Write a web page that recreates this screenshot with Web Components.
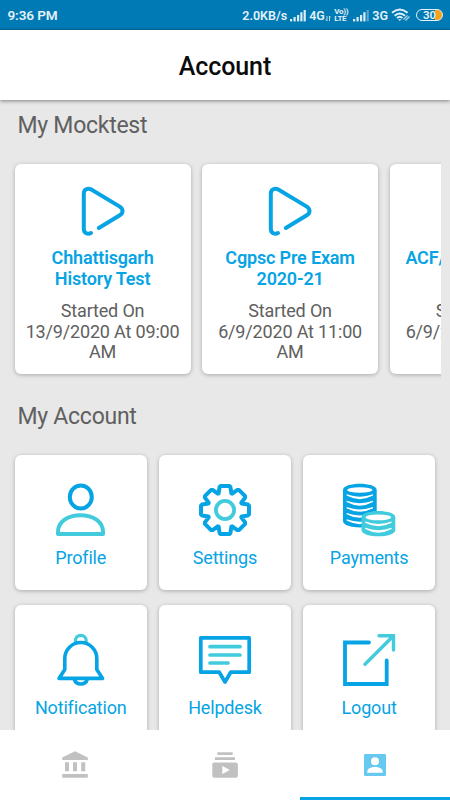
<!DOCTYPE html>
<html lang="en">
<head>
<meta charset="utf-8">
<title>Account</title>
<style>
html,body{margin:0;height:100%;overflow:hidden}
body{font-family:Roboto,"Liberation Sans",sans-serif;background:#e8e8e8}
</style>
</head>
<body>
<account-screen></account-screen>
<script>
const define = (name, markup) => {
  const template = document.createElement('template');
  template.innerHTML = markup;
  customElements.define(name, class extends HTMLElement {
    constructor() {
      super();
      this.attachShadow({mode: 'open'}).append(template.content.cloneNode(true));
    }
  });
};

const BLUE = '#06a4e4', TEAL = '#42cbdd';

// Eight-toothed gear outline around (27,27)
const gear = (() => {
  const pts = [];
  for (let k = 0; k < 8; k++) {
    const a = k * Math.PI / 4, c = Math.cos(a), s = Math.sin(a);
    for (const [x, y] of [[-6.4,-16.6],[-5.4,-23],[-4.4,-24],[4.4,-24],[5.4,-23],[6.4,-16.6]])
      pts.push((27 + x*c - y*s).toFixed(1) + ' ' + (27 + x*s + y*c).toFixed(1));
  }
  return 'M' + pts.join('L') + 'Z';
})();

const sag = (x1, x2, ys) => ys.map(y => `<path d="M${x1} ${y}Q${(x1+x2)/2} ${y+4.8} ${x2} ${y}V${y+1.3}Q${(x1+x2)/2} ${y+8.4} ${x1} ${y+1.3}Z" fill="#fff"/>`).join('');

const ICONS = {
  profile: `<g fill="none" stroke-width="4"><ellipse cx="26.8" cy="14" rx="11" ry="11.6" stroke="${BLUE}"/><path d="M4 51V49C4 38.5 14 32.2 26.5 32.2S49 38.5 49 49V51Z" stroke="${TEAL}" stroke-linejoin="round"/></g>`,
  settings: `<g fill="none"><path d="${gear}" stroke="${BLUE}" stroke-width="4" stroke-linejoin="round"/><circle cx="27" cy="27" r="9.1" stroke="${TEAL}" stroke-width="3.8"/></g>`,
  payments: `<path d="M1 7C1-1.4 34.7-1.4 34.7 7V38C34.7 46.6 1 46.6 1 38Z" fill="${BLUE}"/><ellipse cx="17.8" cy="7" rx="12.6" ry="2.8" fill="#fff"/>${sag(4.6,31,[11.3,17.8,24,30,36.3])}
    <path d="M19.5 34.2C19.5 25.8 53.3 25.8 53.3 34.2V47C53.3 55.4 19.5 55.4 19.5 47Z" fill="${TEAL}"/><ellipse cx="36.4" cy="34.4" rx="12.7" ry="2.9" fill="#fff"/>${sag(23.2,49.6,[38.5,44.8])}`,
  notification: `<g fill="none"><circle cx="26.8" cy="7.7" r="5.4" stroke="${TEAL}" stroke-width="3.3"/><path d="M5 45.4L10.8 36.5V25.5A16 16 0 0 1 42.8 25.5V36.5L48.6 45.4Z" fill="#fff" stroke="${BLUE}" stroke-width="3.6" stroke-linejoin="round"/><path d="M20.4 46.5C22 52.4 31.6 52.4 33.2 46.5" stroke="${BLUE}" stroke-width="3.6"/></g>`,
  helpdesk: `<g fill="none" stroke-linejoin="round" stroke-linecap="round" stroke-width="3.7"><path d="M2.8 4.8H51.2V39.2H32.7L27 49L21.3 39.2H2.8Z" stroke="${BLUE}"/><path d="M12 13.7H42M12 22H42M12 30H30" stroke="${TEAL}"/></g>`,
  logout: `<g fill="none" stroke-width="3.8" stroke-linecap="round"><path d="M27 9.5H3V51H44.7V27.5" stroke="${BLUE}"/><path d="M23 31.3L51 3.3M37 2.7H51.5V17" stroke="${TEAL}" stroke-width="3.4"/></g>`
};

define('signal-bars', `<style>:host{display:block;flex:none;width:17px;height:13px}svg{display:block}.last{opacity:var(--last,1)}</style>
<svg width="17" height="13" fill="#dcecf5"><rect x="0" y="10" width="2.2" height="2.4"/><rect x="3.5" y="8" width="2.2" height="4.4"/><rect x="7" y="6" width="2.2" height="6.4"/><rect x="10.3" y="3.2" width="2.2" height="9.2"/><rect class="last" x="13.6" y="1" width="2.2" height="11.4"/></svg>`);

define('status-bar', `<style>
:host{display:flex;align-items:center;height:30px;box-sizing:border-box;background:#007ab5;border-bottom:1px solid #006ba5;color:#e4f1f8;padding:1px 7px 0 7.5px;white-space:nowrap}
.time{flex:1;font-weight:600;font-size:13.6px;letter-spacing:-.15px}
.net{font-size:12.5px;font-weight:600}
svg{display:block;flex:none}
.lte{font-size:8px;line-height:7.5px;font-weight:700;width:14px;margin:0 5px 0 3.5px;letter-spacing:-.3px}
.lte span{display:block}
signal-bars{margin:0 2px 0 3px}
.bat{box-sizing:border-box;width:27px;height:12px;border:1.4px solid #e4f1f8;border-radius:6px;font-size:11.5px;font-weight:600;line-height:10.5px;text-align:center;margin-left:6px;background:linear-gradient(90deg,transparent 70%,#f8a21b 70%)}
</style>
<span class="time">9:36 PM</span><span class="net">2.0KB/s</span><signal-bars></signal-bars><span class="net">4G</span>
<svg width="6" height="13" stroke="#b9d8e8" fill="none"><path d="M2 7V12M.8 10.5L2 12M4.5 12V7M3.8 8H5.8"/></svg>
<span class="lte"><span>Vo))</span><span>LTE</span></span><signal-bars style="--last:.4;margin-left:0"></signal-bars><span class="net">3G</span>
<svg width="19" height="14" viewBox="0 0 19 14" fill="none" stroke="#e4f1f8" stroke-width="1.9" style="margin-left:3px"><path d="M1 4.8Q8.7-1.8 16.6 4.8M3.6 7.7Q8.7 3.2 14 7.7M6 10.1Q8.7 7.6 11.5 10.1"/><path d="M7 11.2L8.8 13L10.5 11.2Z" fill="#e4f1f8" stroke="none"/><path d="M12.5 11.5L16.5 7.5M14.5 12.5L18.5 8.5" stroke-width="1.3" opacity=".75"/></svg>
<span class="bat">30</span>`);

define('title-bar', `<style>
:host{display:flex;align-items:center;justify-content:center;height:70px;position:relative;z-index:1;background:#fff;color:#0b0b0b;font-size:25px;letter-spacing:-.1px;font-weight:500;box-shadow:0 1px 4px rgba(0,0,0,.45);box-sizing:border-box;padding-top:2px}
</style><slot></slot>`);

define('section-title', `<style>:host{display:block;font-size:23px;letter-spacing:-.27px;line-height:28px;color:#606060;padding-left:17.5px}</style><slot></slot>`);

define('test-card', `<style>
:host{display:flex;flex-direction:column;align-items:center;flex:none;width:176px;height:210px;box-sizing:border-box;border-radius:6px;background:#fff;box-shadow:0 1px 4px rgba(0,0,0,.27);text-align:center;padding:20px 5px 0;font-size:18px;letter-spacing:-.17px;line-height:20.6px;color:#606060}
svg{display:block;flex:none}
.name{font-weight:600;color:${BLUE};margin-top:10px;min-height:41.2px;white-space:nowrap}
.date{margin-top:12px;white-space:nowrap}
</style>
<svg width="48" height="54" viewBox="79 184 48 54" fill="none" stroke="${BLUE}" stroke-width="4" stroke-linecap="round" stroke-linejoin="round"><path d="M91 233.1C88 234.8 83.8 233.3 83.8 229V193.6C83.8 189.5 87.8 187.6 91.3 189.6L119.8 206.6C123.4 208.9 123.4 213.1 119.8 215.3L98.8 228"/></svg>
<div class="name"><slot name="name"></slot></div><div class="date">Started On<br><slot name="date"></slot></div>`);

customElements.define('account-card', class extends HTMLElement {
  constructor() {
    super();
    this.attachShadow({mode: 'open'}).innerHTML = `<style>
:host{display:flex;flex-direction:column;align-items:center;height:135px;box-sizing:border-box;border-radius:6px;background:#fff;box-shadow:0 1px 4px rgba(0,0,0,.27);padding-top:28.5px;font-size:18px;letter-spacing:-.17px;line-height:22px;color:${BLUE}}
svg{display:block;flex:none}
.label{margin-top:10px}
</style><svg width="54" height="54" viewBox="0 0 54 54">${ICONS[this.getAttribute('icon')] || ''}</svg><div class="label"><slot></slot></div>`;
  }
});

define('tab-bar', `<style>
:host{display:grid;grid-template-columns:repeat(3,1fr);height:70px;background:#fff;position:relative;z-index:1}
.tab{display:flex;justify-content:center;align-items:center;box-sizing:border-box;border-bottom:3px solid transparent;padding-top:2px}
.on{border-color:${BLUE}}
svg{display:block}
</style>
<div class="tab"><svg width="30" height="30" viewBox="60 750 30 30" fill="#c1c1c1"><path d="M62.2 760V757.5L75 751.2L87.8 757.5V760ZM65 762.3H69V771.3H65ZM73 762.3H77V771.3H73ZM81.2 762.3H85.2V771.3H81.2ZM62.2 774H87.8V777.8H62.2Z"/></svg></div>
<div class="tab"><svg width="30" height="30" viewBox="210 750 30 30" fill="#c1c1c1"><path d="M217.3 752.3H232.7V755H217.3ZM215 757.3H235V760H215Z"/><rect x="212.3" y="762.4" width="25.6" height="15.3" rx="2"/><path d="M222.3 766V774L229.8 770Z" fill="#fff"/></svg></div>
<div class="tab on"><svg width="30" height="30" viewBox="360 750 30 30"><rect x="364" y="754" width="22" height="22" rx="1.3" fill="#67c9ef"/><circle cx="375" cy="761.3" r="4" fill="#fff"/><path d="M367.3 772.7V771.5C367.3 768 372 766.9 375 766.9S382.7 768 382.7 771.5V772.7Z" fill="#fff"/></svg></div>`);

define('account-screen', `<style>
:host{display:flex;flex-direction:column;width:450px;height:800px;overflow:hidden;background:#e8e8e8}
main{flex:1;min-height:0;overflow:hidden;padding-top:12px}
.tests{display:flex;gap:11.5px;width:441px;box-sizing:border-box;overflow:hidden;padding:24px 0 15px 14.6px}
.grid{display:grid;grid-template-columns:repeat(3,132.5px);column-gap:11.7px;row-gap:15px;padding:23.5px 0 0 14.5px}
</style>
<status-bar></status-bar>
<title-bar>Account</title-bar>
<main>
<section-title>My Mocktest</section-title>
<div class="tests">
<test-card><span slot="name">Chhattisgarh<br>History Test</span><span slot="date">13/9/2020 At 09:00<br>AM</span></test-card>
<test-card><span slot="name">Cgpsc Pre Exam<br>2020-21</span><span slot="date">6/9/2020 At 11:00<br>AM</span></test-card>
<test-card><span slot="name">ACF/Ranger Exam</span><span slot="date">6/9/2020 At 11:00</span></test-card>
</div>
<section-title style="margin-top:14px">My Account</section-title>
<div class="grid"></div>
</main>
<tab-bar></tab-bar>`);

document.querySelector('account-screen').shadowRoot.querySelector('.grid').innerHTML =
  ['Profile','Settings','Payments','Notification','Helpdesk','Logout']
  .map(n => `<account-card icon="${n.toLowerCase()}">${n}</account-card>`).join('');
</script>
</body>
</html>
